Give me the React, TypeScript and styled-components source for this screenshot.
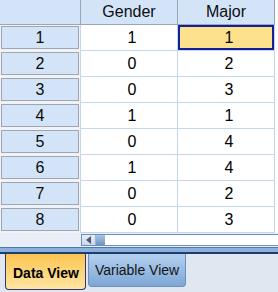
import React from "react";
import styled, { createGlobalStyle } from "styled-components";

const rows = [
  [1, 1],
  [0, 2],
  [0, 3],
  [1, 1],
  [0, 4],
  [1, 4],
  [0, 2],
  [0, 3],
];

export default function App() {
  return (
    <>
      <Global />
      <Window>
        <Grid>
          <Corner />
          <ColHeader>Gender</ColHeader>
          <ColHeader>Major</ColHeader>
          {rows.map((r, i) => (
            <React.Fragment key={i}>
              <RowHeaderCell>
                <RowHeader>{i + 1}</RowHeader>
              </RowHeaderCell>
              <Cell>{r[0]}</Cell>
              <Cell $selected={i === 0}>{r[1]}</Cell>
            </React.Fragment>
          ))}
        </Grid>
        <ScrollRow>
          <ScrollSpacer />
          <ScrollBar>
            <ArrowButton>
              <svg width="6" height="8" viewBox="0 0 6 8">
                <path d="M5 0 L0 4 L5 8 Z" fill="#4a5a70" />
              </svg>
            </ArrowButton>
            <Thumb />
            <Track />
          </ScrollBar>
        </ScrollRow>
        <Splitter />
        <TabBar>
          <Tab $active>Data View</Tab>
          <Tab>Variable View</Tab>
        </TabBar>
      </Window>
    </>
  );
}

const Global = createGlobalStyle`
  html, body {
    margin: 0;
    padding: 0;
    background: #e1e7f0;
  }
`;

const Window = styled.div`
  width: 278px;
  height: 292px;
  display: flex;
  flex-direction: column;
  background: #ffffff;
  font-family: "Liberation Sans", Arial, sans-serif;
  overflow: hidden;
`;

const Grid = styled.div`
  display: grid;
  grid-template-columns: 81px 97px 97px 3px;
  grid-template-rows: 25px repeat(8, 26px);
  background: #ffffff;

  & > :nth-child(3n) {
    grid-column: 3;
  }
`;

const Corner = styled.div`
  background: #d3e4f9;
  border-right: 1px solid #9ba6b4;
  border-bottom: 1px solid #9ba6b4;
`;

const ColHeader = styled.div`
  background: #d3e4f9;
  border-right: 1px solid #9ba6b4;
  border-bottom: 1px solid #9ba6b4;
  display: flex;
  align-items: center;
  justify-content: center;
  font-size: 16px;
  color: #0c0c0c;
`;

const RowHeaderCell = styled.div`
  grid-column: 1;
  padding: 1px 1px 2px 1px;
  background: #eef3fa;
  border-right: 1px solid #c3d6ee;
`;

const RowHeader = styled.div`
  height: 100%;
  box-sizing: border-box;
  border: 1px solid #a2a6ac;
  background: #d3e4f9;
  display: flex;
  align-items: center;
  justify-content: center;
  font-size: 16px;
  color: #0a0a0a;
`;

const Cell = styled.div<{ $selected?: boolean }>`
  box-sizing: border-box;
  background: ${(p) => (p.$selected ? "#fde18c" : "#ffffff")};
  border-right: 1px solid #c3d6ee;
  border-bottom: 1px solid #c3d6ee;
  ${(p) => (p.$selected ? "box-shadow: inset 0 0 0 2px #12209e;" : "")}
  display: flex;
  align-items: center;
  justify-content: center;
  padding-left: 6px;
  font-size: 16px;
  color: #000000;
`;

const ScrollRow = styled.div`
  display: flex;
  height: 12px;
  background: #e7eef7;
  padding-top: 1px;
  padding-bottom: 1px;
`;

const ScrollSpacer = styled.div`
  width: 81px;
`;

const ScrollBar = styled.div`
  flex: 1;
  display: flex;
  border: 1px solid #6d8fbd;
  border-right: none;
  background: #ffffff;
`;

const ArrowButton = styled.div`
  width: 13px;
  display: flex;
  align-items: center;
  justify-content: center;
  background: linear-gradient(#e8eef6, #c9d8ea);
  border-right: 1px solid #9fb5d2;
`;

const Thumb = styled.div`
  width: 9px;
  background: linear-gradient(#a9c4e4, #6f96c6);
`;

const Track = styled.div`
  flex: 1;
  background: #ffffff;
`;

const Splitter = styled.div`
  height: 4px;
  background: #8cb0dc;
  border-top: 1px solid #4f78b0;
  border-bottom: 2px solid #1d3c6e;
`;

const TabBar = styled.div`
  flex: 1;
  display: flex;
  align-items: flex-start;
  gap: 2px;
  padding-left: 5px;
  background: #e1e7f0;
`;

const Tab = styled.div<{ $active?: boolean }>`
  height: ${(p) => (p.$active ? "36px" : "33px")};
  box-sizing: border-box;
  display: flex;
  align-items: center;
  padding: ${(p) => (p.$active ? "3px 6px 0 7px" : "0 6px")};
  font-size: 14px;
  font-weight: ${(p) => (p.$active ? 700 : 400)};
  color: ${(p) => (p.$active ? "#000000" : "#141414")};
  background: ${(p) =>
    p.$active
      ? "linear-gradient(#fcc451, #ffe6a3)"
      : "linear-gradient(#b3d0ee, #7ea7d6)"};
  border: 1px solid ${(p) => (p.$active ? "#34366a" : "#6d8fbd")};
  border-top: none;
  border-radius: 0 0 4px 4px;
`;
